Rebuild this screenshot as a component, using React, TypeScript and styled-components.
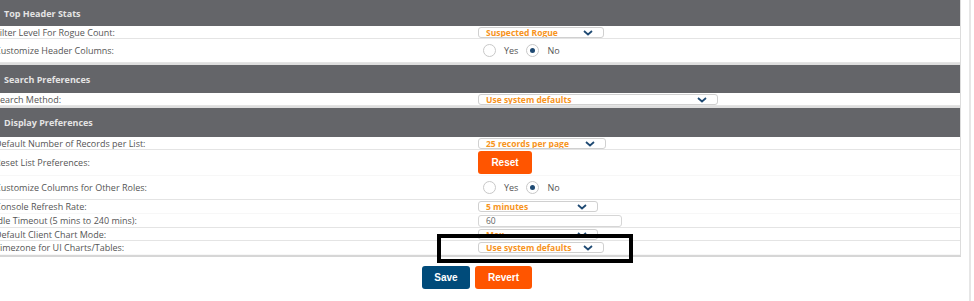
import React from "react";
import styled, { createGlobalStyle } from "styled-components";

const Global = createGlobalStyle`
  html, body { margin: 0; padding: 0; background: #fff; }
  body { font-family: "Open Sans", "Liberation Sans", sans-serif; overflow: hidden; }
`;

const Page = styled.div`
  display: flex;
  width: 974px;
  height: 301px;
  overflow: hidden;
`;

const Main = styled.div`
  width: 967px;
  margin-left: -6px;
  display: flex;
  flex-direction: column;
`;

const Track = styled.div`
  width: 2px;
  margin-left: 8px;
  background: #e6e6e6;
  align-self: stretch;
`;

const Table = styled.div`
  display: flex;
  flex-direction: column;
  border-right: 1px solid #dcdcdc;
  border-bottom: 2px solid #d6d6d6;
`;

const Header = styled.div<{ $h: number }>`
  height: ${(p) => p.$h}px;
  background: #646569;
  color: #e4e4e4;
  font-weight: 700;
  font-size: 9px;
  display: flex;
  align-items: center;
  padding-left: 10px;
  border-top: ${(p) => (p.$h > 26 ? "2px solid #dedede" : "none")};
  box-sizing: border-box;
`;

const Row = styled.div<{ $h: number; $line?: boolean }>`
  height: ${(p) => p.$h}px;
  display: grid;
  grid-template-columns: 484px 1fr;
  align-items: center;
  border-bottom: ${(p) => (p.$line === false ? "1px solid #f7f7f7" : "1px solid #e4e4e4")};
  box-sizing: border-box;
`;

const Label = styled.div`
  font-size: 9px;
  color: #555;
  white-space: nowrap;
  padding-left: 1px;
`;

const Cell = styled.div`
  display: flex;
  align-items: center;
`;

const Select = styled.div<{ $w: number }>`
  width: ${(p) => p.$w}px;
  height: 11px;
  box-sizing: border-box;
  border: 1px solid #d0d0d0;
  border-radius: 3px;
  display: flex;
  align-items: center;
  justify-content: space-between;
  padding: 0 10px 0 7px;
  font-size: 8.5px;
  font-weight: 700;
  color: #f7941d;
  background: #fff;
  overflow: hidden;
`;

const Chevron = () => (
  <svg width="10" height="6" viewBox="0 0 10 6">
    <path d="M1 1 L5 4.5 L9 1" fill="none" stroke="#1f4a73" strokeWidth="1.8" />
  </svg>
);

const Input = styled.div`
  width: 144px;
  height: 12px;
  box-sizing: border-box;
  border: 1px solid #d6d6d6;
  border-radius: 3px;
  font-size: 8.5px;
  color: #666;
  padding-left: 7px;
  display: flex;
  align-items: center;
`;

const Button = styled.div<{ $bg: string; $w: number }>`
  width: ${(p) => p.$w}px;
  height: 23px;
  background: ${(p) => p.$bg};
  border-radius: 3px;
  color: #fff;
  font-weight: 700;
  font-size: 10px;
  display: flex;
  align-items: center;
  justify-content: center;
  font-family: "Liberation Sans", Arial, sans-serif;
`;

const Radios = styled.div`
  display: flex;
  align-items: center;
  padding-left: 5px;
  font-size: 9px;
  color: #555;
`;

const Circle = styled.span<{ $on?: boolean }>`
  width: 13px;
  height: 13px;
  box-sizing: border-box;
  border-radius: 50%;
  border: 1px solid #c8c8c8;
  display: inline-flex;
  align-items: center;
  justify-content: center;
  margin-right: 8px;
  &::after {
    content: "";
    width: 5px;
    height: 5px;
    border-radius: 50%;
    background: ${(p) => (p.$on ? "#1f4a73" : "transparent")};
  }
`;

const RadioText = styled.span`
  margin-right: 8px;
`;

const Actions = styled.div`
  display: flex;
  gap: 5px;
  padding-left: 428px;
  margin-top: 9px;
`;

const Overlay = styled.div`
  position: absolute;
  left: 437px;
  top: 234px;
  width: 196px;
  height: 29px;
  box-sizing: border-box;
  border: 4px solid #000;
  pointer-events: none;
`;

const YesNo = () => (
  <Radios>
    <Circle />
    <RadioText>Yes</RadioText>
    <Circle $on />
    <RadioText>No</RadioText>
  </Radios>
);

export default function App() {
  return (
    <>
      <Global />
      <Page>
        <Main>
          <Table>
            <Header $h={26}>Top Header Stats</Header>
            <Row $h={13}>
              <Label>Filter Level For Rogue Count:</Label>
              <Cell>
                <Select $w={126}>Suspected Rogue<Chevron /></Select>
              </Cell>
            </Row>
            <Row $h={24}>
              <Label>Customize Header Columns:</Label>
              <Cell><YesNo /></Cell>
            </Row>
            <Header $h={30}>Search Preferences</Header>
            <Row $h={13}>
              <Label>Search Method:</Label>
              <Cell>
                <Select $w={240}>Use system defaults<Chevron /></Select>
              </Cell>
            </Row>
            <Header $h={31}>Display Preferences</Header>
            <Row $h={13}>
              <Label>Default Number of Records per List:</Label>
              <Cell>
                <Select $w={128}>25 records per page<Chevron /></Select>
              </Cell>
            </Row>
            <Row $h={26} $line={false}>
              <Label>Reset List Preferences:</Label>
              <Cell>
                <Button $bg="#ff5500" $w={54}>Reset</Button>
              </Cell>
            </Row>
            <Row $h={24}>
              <Label>Customize Columns for Other Roles:</Label>
              <Cell><YesNo /></Cell>
            </Row>
            <Row $h={14} $line={false}>
              <Label>Console Refresh Rate:</Label>
              <Cell>
                <Select $w={120}>5 minutes<Chevron /></Select>
              </Cell>
            </Row>
            <Row $h={14}>
              <Label>Idle Timeout (5 mins to 240 mins):</Label>
              <Cell><Input>60</Input></Cell>
            </Row>
            <Row $h={13}>
              <Label>Default Client Chart Mode:</Label>
              <Cell>
                <Select $w={120}>Max<Chevron /></Select>
              </Cell>
            </Row>
            <Row $h={14} $line={false}>
              <Label>Timezone for UI Charts/Tables:</Label>
              <Cell>
                <Select $w={126}>Use system defaults<Chevron /></Select>
              </Cell>
            </Row>
          </Table>
          <Actions>
            <Button $bg="#004b7a" $w={48}>Save</Button>
            <Button $bg="#ff5500" $w={57}>Revert</Button>
          </Actions>
        </Main>
        <Track />
      </Page>
      <Overlay />
    </>
  );
}
